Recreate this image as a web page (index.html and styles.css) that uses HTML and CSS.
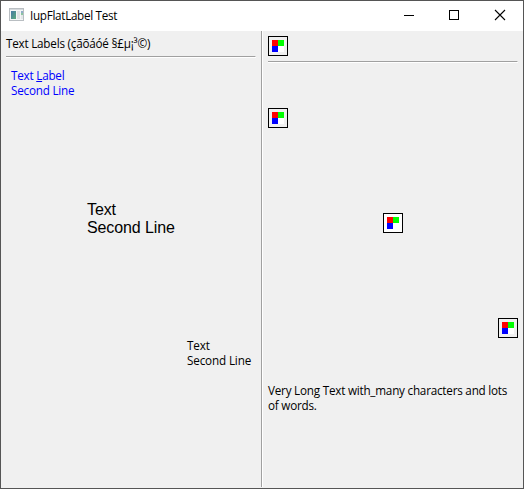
FILE: index.html
```html
<!DOCTYPE html>
<html lang="en">
<head>
<meta charset="utf-8">
<title>IupFlatLabel Test</title>
<link rel="stylesheet" href="styles.css">
</head>
<body>
<div class="window">
  <header class="titlebar">
    <svg class="app-icon" width="16" height="14" viewBox="0 0 16 14" shape-rendering="crispEdges">
      <defs><linearGradient id="pane" x1="0" y1="0" x2="1" y2="1"><stop offset="0" stop-color="#4679a5"/><stop offset="1" stop-color="#5bab7c"/></linearGradient></defs>
      <path fill="#b9bec2" d="M0 0h15v13H0z"/><path fill="#d5d9dc" d="M1 1h13v11H1z"/>
      <path fill="#f4f6f7" d="M1 2h13v10H1z"/><path fill="url(#pane)" d="M2 3h5v8H2z"/>
      <path fill="#dfe2e4" d="M8 3h3v8H8z"/><path fill="#91adc9" d="M12 3h2v2h-2z"/><path fill="#8bc5a1" d="M12 5h2v2h-2z"/><path fill="#e4e7e9" d="M12 7h2v4h-2z"/>
    </svg>
    <h1 class="title">IupFlatLabel Test</h1>
    <div class="controls">
      <svg width="46" height="29" viewBox="0 0 46 29" shape-rendering="crispEdges"><path fill="#000" d="M19 14h10v1H19z"/></svg>
      <svg width="46" height="29" viewBox="0 0 46 29" shape-rendering="crispEdges"><path fill="none" stroke="#000" d="M18.500 9.500h9v9h-9z"/></svg>
      <svg width="46" height="29" viewBox="0 0 46 29"><path fill="none" stroke="#000" stroke-width="1.1" d="M18 9l10 10M28 9L18 19"/></svg>
    </div>
  </header>
  <main class="panes">
    <section class="pane pane-text">
      <p class="label heading">Text Labels (çãõáóé §£µ¡³©)</p>
      <hr class="rule">
      <p class="label blue">Text <u>L</u>abel<br>Second Line</p>
      <p class="label large">Text<br>Second Line</p>
      <p class="label end">Text<br>Second Line</p>
    </section>
    <div class="divider"></div>
    <section class="pane pane-image">
      <div class="swatch"><i class="red"></i><i class="green"></i><i class="blue-cell"></i><i class="white"></i></div>
      <hr class="rule">
      <div class="swatch left"><i class="red"></i><i class="green"></i><i class="blue-cell"></i><i class="white"></i></div>
      <div class="swatch middle"><i class="red"></i><i class="green"></i><i class="blue-cell"></i><i class="white"></i></div>
      <div class="swatch right"><i class="red"></i><i class="green"></i><i class="blue-cell"></i><i class="white"></i></div>
      <p class="label long">Very Long Text with_many characters and lots<br>of words.</p>
    </section>
  </main>
</div>
</body>
</html>
```

FILE: styles.css
```css
* { box-sizing: border-box; }
body { margin: 0; font: 11.7px/15px "Open Sans", "Noto Sans", sans-serif; color: #000; }
.window { width: 524px; height: 489px; border: 1px solid #555; background: #f0f0f0; display: flex; flex-direction: column; }
.titlebar { height: 30px; background: #fff; display: flex; flex: none; align-items: flex-start; }
.app-icon { margin: 7px 0 0 8px; }
.title { margin: 7px 0 0 5px; font: inherit; letter-spacing: -0.3px; white-space: nowrap; }
.controls { display: flex; margin-left: auto; }
.controls svg { display: block; }
.panes { flex: 1; display: flex; }
.pane { display: flex; flex-direction: column; align-items: flex-start; }
.pane-text { width: 260px; padding: 5px 6px 0 5px; }
.pane-image { width: 260px; padding: 5px 5px 0 5px; }
.divider { width: 2px; height: 456px; background: #a0a0a0; border-right: 1px solid #fff; }
.rule { width: 250px; height: 2px; margin: 5px 0 0; border: 0; border-top: 1px solid #a0a0a0; border-right: 1px solid #fff; border-bottom: 1px solid #fff; flex: none; }
.label { margin: 0; white-space: nowrap; letter-spacing: -0.22px; }
.blue { color: #0000ff; margin: 10px 0 0 5px; }
.large { font: 16px/18px "Liberation Sans", sans-serif; letter-spacing: -0.1px; margin: 103px 0 0 81px; }
.end { margin: 101px 0 0 181px; letter-spacing: -0.15px; }
.swatch { width: 20px; height: 20px; padding: 3px; border: 1px solid #000; display: grid; grid-template: 6px 6px / 6px 6px; flex: none; }
.red { background: #f00; }
.green { background: #0f0; }
.blue-cell { background: #00f; }
.white { background: #fff; }
.left { margin-top: 45px; }
.middle { margin: 85px 0 0 115px; background: #fff; }
.right { margin: 85px 0 0 230px; }
.long { margin-top: 45px; }
```
